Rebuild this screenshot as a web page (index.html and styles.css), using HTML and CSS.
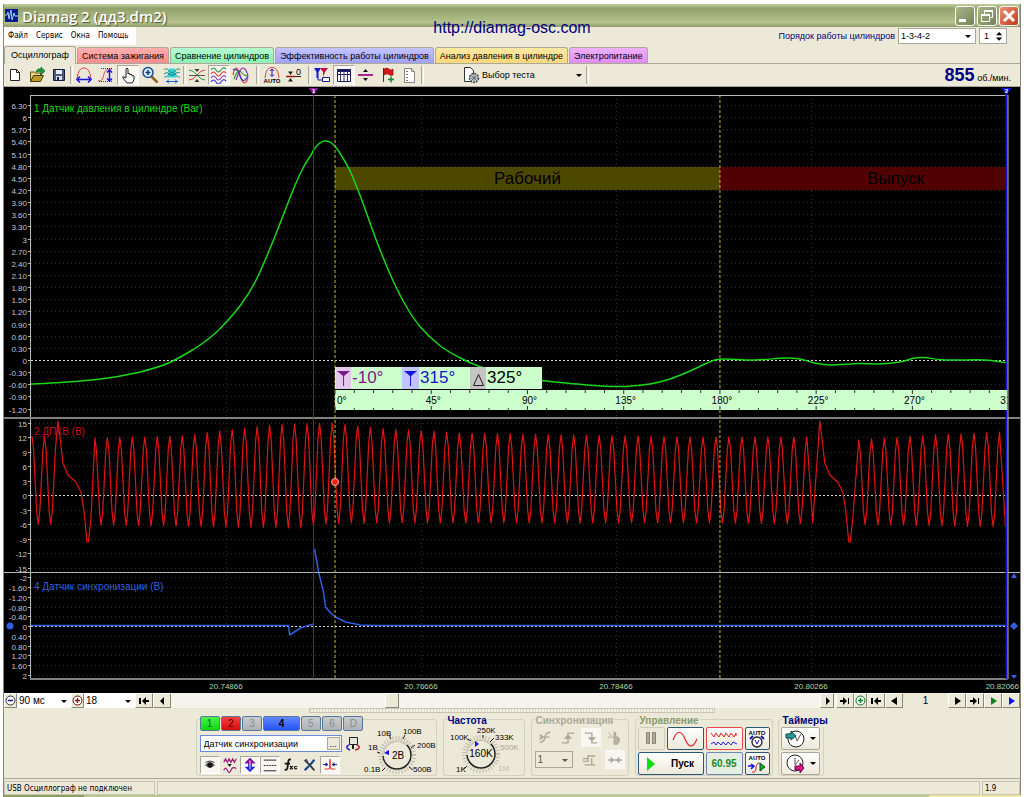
FILE: index.html
```html
<!DOCTYPE html>
<html lang="ru">

<head>
    <meta charset="UTF-8">
    <meta name="viewport" content="width=device-width, initial-scale=1.0">
    <title>Diamag 2 (дд3.dm2)</title>
    <link rel="stylesheet" href="styles.css">
</head>

<body>
    <div class="window">
        <header class="titlebar">
            <svg class="app-icon" width="13" height="13" viewBox="0 0 13 13"><rect width="13" height="13" fill="#0a1a8c"/><path d="M0 6h2l1-3 1 7 2-9 1 10 2-7 1 3h3" fill="none" stroke="#9fd0ff"/></svg>
            <h1>Diamag 2 (дд3.dm2)</h1>
            <button class="win-btn" aria-label="Свернуть"><svg width="20" height="20" viewBox="0 0 20 20"><path d="M4 14.500h7" stroke="#fff" stroke-width="3"/></svg></button>
            <button class="win-btn" aria-label="Развернуть"><svg width="20" height="20" viewBox="0 0 20 20"><path d="M7.500 8V4.500h8v7H13M4.500 8.500h8v7h-8z" fill="none" stroke="#fff"/><path d="M4 9h9M7 5h9" stroke="#fff" stroke-width="2"/></svg></button>
            <button class="win-btn close" aria-label="Закрыть"><svg width="20" height="20" viewBox="0 0 20 20"><path d="M5 5l10 10M15 5L5 15" stroke="#fff" stroke-width="3"/></svg></button>
        </header>
        <a class="site-link" href="http://diamag-osc.com">http://diamag-osc.com</a>

        <div class="menu-row">
            <nav class="menu">
                <button>Файл</button>
                <button>Сервис</button>
                <button>Окна</button>
                <button>Помощь</button>
            </nav>
            <div class="order">
                <label for="order">Порядок работы цилиндров</label>
                <span class="drop order-drop"><select id="order"><option>1-3-4-2</option></select></span>
                <span class="spin"><input type="text" value="1" aria-label="Номер цилиндра"><svg width="7" height="10" viewBox="0 0 9 12"><path d="M0 5l4-4 4 4zM0 8l4 4 4-4z"/></svg></span>
            </div>
        </div>

        <div class="tabs" role="tablist">
            <button class="tab active" role="tab">Осциллограф</button>
            <button class="tab red" role="tab">Система зажигания</button>
            <button class="tab green" role="tab">Сравнение цилиндров</button>
            <button class="tab blue" role="tab">Эффективность работы цилиндров</button>
            <button class="tab yellow" role="tab">Анализ давления в цилиндре</button>
            <button class="tab violet" role="tab">Электропитание</button>
        </div>

        <div class="toolbar">
            <button class="tool" aria-label="Новый"><svg viewBox="0 0 18 18"><path d="M4.500 3.500h6l3 3v8h-9z" fill="#fff" stroke="#222"/><path d="M10.500 3.500v3h3" fill="none" stroke="#222"/></svg></button>
            <button class="tool" aria-label="Открыть"><svg viewBox="0 0 18 18"><path d="M2.500 15V6h4l1 1h5v3" fill="#e8d878" stroke="#5c5010"/><path d="M2.500 15.500l3-6h10l-3 6z" fill="#b99b28" stroke="#4a3d08"/><path d="M8 6q1-4 5-3V1l4 4-4 4V6q-3-1-5 0z" fill="#1f9a3a" stroke="#0a5520" stroke-width=".6"/></svg></button>
            <button class="tool" aria-label="Сохранить"><svg viewBox="0 0 18 18"><path d="M3.500 3.500h11v11h-11z" fill="#4d5a86" stroke="#151c3a"/><path d="M6 4h6v4H6z" fill="#e8ecf8"/><path d="M6 10h6v4H6z" fill="#dde"/><path d="M7 11h2v3H7z" fill="#151c3a"/></svg></button>
            <i class="sep"></i>
            <button class="tool" aria-label="По горизонтали"><svg viewBox="0 0 18 18"><path d="M2 13C3 4 6 2 9 2s6 2 7 11" fill="none" stroke="#e04040"/><path d="M2 13.500h14M5 10.500l-3 3 3 3M13 10.500l3 3-3 3" fill="none" stroke="#1616e0" stroke-width="1.500"/></svg></button>
            <button class="tool" aria-label="По вертикали"><svg viewBox="0 0 18 18"><path d="M1 15c5 0 5-3 6-7s3-5 8-5" fill="none" stroke="#e04040"/><path d="M4 2.500h12M2 15.500h14" stroke="#333" stroke-dasharray="1 1"/><path d="M12.500 4v11M10 6.500L12.500 4 15 6.500M10 12.500l2.500 2.500 2.500-2.500" fill="none" stroke="#1616e0" stroke-width="1.500"/></svg></button>
            <button class="tool pressed" aria-label="Рука"><svg viewBox="0 0 18 18"><path d="M7 12V3q1-2 2 0v5q1-2 2 0v1q1-2 2 0v1q2-1 2 0v3q0 2-2 4H8l-4-5q-1-2 1-1z" fill="#fff" stroke="#222"/></svg></button>
            <button class="tool" aria-label="Масштаб"><svg viewBox="0 0 18 18"><path d="M10.500 10.500l6 6" stroke="#8a6420" stroke-width="2.500"/><circle cx="7" cy="6.500" r="5" fill="#d5ecff" stroke="#1c4f9c" stroke-width="1.500"/><path d="M4.500 6.500h5M7 4v5" stroke="#123a80" stroke-width="1.500"/></svg></button>
            <button class="tool" aria-label="Авторазмер"><svg viewBox="0 0 18 18"><path d="M6 2.500h6l1 3-1 2 2 4H4l2-4-1-2z" fill="#35d4dc"/><g fill="none"><path d="M1 4q3-3 5 1t6 0 5-1" stroke="#1a9a60"/><path d="M1 8q3-3 5 0t6 0 5-1" stroke="#087a86"/><path d="M1 11q3 1 5-3t6 0 5 3" stroke="#209aa8"/><path d="M3 15.500h12M6 13.500l-2 2 2 2M12 13.500l2 2-2 2" stroke="#1a60c8"/></g></svg></button>
            <i class="sep"></i>
            <button class="tool" aria-label="Центровка"><svg viewBox="0 0 18 18"><path d="M1 4q4 0 8 5t8 5" fill="none" stroke="#2a9a40"/><path d="M1 14q4 0 8-5t8-5" fill="none" stroke="#e04040"/><path d="M1 9.500h16" stroke="#555"/><path d="M9 6L6.500 3h5zM9 13l-2.500 3h5z" fill="#333"/></svg></button>
            <button class="tool pressed" aria-label="Раздельно"><svg viewBox="0 0 18 18"><g fill="none" stroke-width="1.200"><path d="M1 4q2.500-4 5 0t5 0 5-1" stroke="#2a9a40"/><path d="M1 8q2.500-4 5 0t5 0 5-1" stroke="#e04040"/><path d="M1 12q2.500-4 5 0t5 0 5-1" stroke="#8a4ab0"/><path d="M1 16q2.500-4 5 0t5 0 5-1" stroke="#3434d8"/></g></svg></button>
            <button class="tool" aria-label="Совместно"><svg viewBox="0 0 18 18"><g fill="none" stroke-width="1.200"><path d="M1 9q3-14 7 0t8 3" stroke="#e04040"/><path d="M1 4q4-3 7 6t8 0" stroke="#3434d8"/><path d="M2 13Q6 2 9 6t7 4" stroke="#2a9a40"/><path d="M4 14Q8 2 11 2t5 8" stroke="#8a28b8"/></g></svg></button>
            <i class="sep wide"></i>
            <button class="tool" aria-label="Авто"><svg viewBox="0 0 18 18"><path d="M2 12C3 3 6 1.500 9 1.500s6 1.500 7 10.500" fill="none" stroke="#e04040"/><path d="M9 3v7M7 5l2-2 2 2M7 8.500l2 2 2-2" fill="none" stroke="#1616c0"/><text x="9" y="17" text-anchor="middle" class="svg-tiny bold">AUTO</text></svg></button>
            <button class="tool" aria-label="Ноль"><svg viewBox="0 0 18 18"><path d="M1 10.500h9" stroke="#a01010" stroke-width="1.500"/><path d="M10 10.500h6" stroke="#222"/><path d="M5.500 9L3 5.500h5zM5.500 12L3 15.500h5z" fill="#222"/><text x="11" y="9" class="svg-small">0</text></svg></button>
            <i class="sep mid"></i>
            <button class="tool" aria-label="Маркеры"><svg viewBox="0 0 18 18"><path d="M1 2h7L5.500 6v6h-2V6z" fill="#1616e0"/><path d="M7 2h8l-3 4-2 5V6z" fill="#c01050"/><path d="M9.500 11.500h7v4h-7z" fill="#fff" stroke="#1616a0"/><path d="M5 12v2h4" fill="none" stroke="#1616a0"/></svg></button>
            <button class="tool pressed" aria-label="Таблица"><svg viewBox="0 0 18 18"><path d="M2.500 3.500h13v12h-13z" fill="#fff" stroke="#181860"/><path d="M2 4h14v2H2z" fill="#181860"/><path d="M2 8.500h14" stroke="#181860"/><path d="M5.500 5v10M9 5v10M12.500 5v10" stroke="#333366"/></svg></button>
            <button class="tool" aria-label="Линия"><svg viewBox="0 0 18 18"><path d="M1 9h15" stroke="#a0108a" stroke-width="1.800"/><path d="M8.500 3L6 6h5zM8.500 15L6 12h5z" fill="#111"/></svg></button>
            <button class="tool" aria-label="Флаг"><svg viewBox="0 0 18 18"><path d="M4.500 2v14" stroke="#333"/><path d="M5 3q3-2 5 0t4 0v6q-2 1-4-.500T5 9z" fill="#d81818" stroke="#7a0808" stroke-width=".6"/><path d="M9 13.500h6M12 10.500v6" stroke="#128a28" stroke-width="1.500"/></svg></button>
            <button class="tool" aria-label="Отчёт"><svg viewBox="0 0 18 18"><path d="M3.500 2.500h7l3 3v11h-10z" fill="#fff" stroke="#888"/><path d="M6 5v10" stroke="#777" stroke-dasharray="1 2" stroke-width="2"/><path d="M10.500 2.500v3h3" fill="none" stroke="#888"/></svg></button>
            <i class="sep"></i>
            <div class="test">
                <svg width="18" height="18" viewBox="0 0 18 18"><path d="M2.500 1.500h6l3 3v11h-9z" fill="#fff" stroke="#333"/><circle cx="12" cy="12" r="4.500" fill="#cdd8d0" stroke="#445" stroke-dasharray="2 1" stroke-width="1.500"/><path d="M8 12h8M12 8v8M9 9l6 6M15 9l-6 6" stroke="#556" stroke-width=".7"/></svg>
                <span class="drop test-drop"><select aria-label="Тест"><option>Выбор теста</option></select></span>
            </div>
            <i class="sep"></i>
            <div class="rpm"><b>855</b> об./мин.</div>
        </div>

        <svg class="scope" id="scope" role="img" aria-label="Осциллограмма"></svg>

        <div class="nav-row">
            <button class="nav-btn round" aria-label="Меньше"><svg width="11" height="11" viewBox="0 0 11 11"><circle cx="5.500" cy="5.500" r="4.500" fill="#fff" stroke="#333"/><path d="M3 5.500h5" stroke="#1a1a90" stroke-width="1.500"/></svg></button>
            <span class="drop time-drop"><select aria-label="Развёртка"><option>90 мс</option></select></span>
            <button class="nav-btn round" aria-label="Больше"><svg width="11" height="11" viewBox="0 0 11 11"><circle cx="5.500" cy="5.500" r="4.500" fill="#fff" stroke="#701010"/><path d="M3 5.500h5M5.500 3v5" stroke="#901a1a" stroke-width="1.500"/></svg></button>
            <span class="drop zoom-drop"><select aria-label="Масштаб"><option>18</option></select></span>
            <button class="nav-btn" aria-label="В начало"><svg width="10" height="8" viewBox="0 0 10 8"><path d="M0 1h2v6H0zM7 0v8L3 4zM7 3h3v2H7z"/></svg></button>
            <button class="nav-btn" aria-label="Назад"><svg width="5" height="8" viewBox="0 0 5 8"><path d="M4 0v8L0 4z"/></svg></button>
            <div class="trough"><span class="thumb"></span></div>
            <button class="nav-btn narrow" aria-label="Вперёд"><svg width="5" height="8" viewBox="0 0 5 8"><path d="M1 0v8l4-4z"/></svg></button>
            <button class="nav-btn" aria-label="В конец"><svg width="10" height="8" viewBox="0 0 10 8"><path d="M8 1h1v6H8zM3 0v8l4-4zM0 3h3v2H0z"/></svg></button>
            <button class="nav-btn round" aria-label="Добавить кадр"><svg width="11" height="11" viewBox="0 0 11 11"><circle cx="5.500" cy="5.500" r="4.500" fill="#fff" stroke="#107020"/><path d="M3 5.500h5M5.500 3v5" stroke="#108020" stroke-width="1.500"/></svg></button>
            <button class="nav-btn" aria-label="Первый кадр"><svg width="10" height="8" viewBox="0 0 10 8"><path d="M0 1h2v6H0zM7 0v8L3 4zM7 3h3v2H7z"/></svg></button>
            <button class="nav-btn" aria-label="Предыдущий кадр"><svg width="7" height="8" viewBox="0 0 7 8"><path d="M6 0v8L0 4z"/></svg></button>
            <output class="frame">1</output>
            <button class="nav-btn" aria-label="Следующий кадр"><svg width="7" height="8" viewBox="0 0 7 8"><path d="M1 0v8l6-4z"/></svg></button>
            <button class="nav-btn" aria-label="Последний кадр"><svg width="10" height="8" viewBox="0 0 10 8"><path d="M8 1h1v6H8zM3 0v8l4-4zM0 3h3v2H0z"/></svg></button>
            <button class="nav-btn" aria-label="Воспроизвести"><svg width="7" height="8" viewBox="0 0 7 8"><path d="M1 0v8l6-4z" fill="#108020"/></svg></button>
            <button class="nav-btn" aria-label="Воспроизвести всё"><svg width="7" height="8" viewBox="0 0 7 8"><path d="M1 0v8l6-4z" fill="#1010f0"/></svg></button>
        </div>

        <div class="splitter"></div>

        <main class="controls">
            <section class="group channels">
                <div class="channel-main">
                    <div class="channel-tabs">
                        <button class="ch ch1">1</button>
                        <button class="ch ch2">2</button>
                        <button class="ch">3</button>
                        <button class="ch ch4">4</button>
                        <button class="ch">5</button>
                        <button class="ch">6</button>
                        <button class="ch">D</button>
                    </div>
                    <div class="sensor-row">
                        <div class="sensor">
                            <input type="text" value="Датчик синхронизации" aria-label="Название датчика">
                            <button aria-label="Выбрать датчик">...</button>
                        </div>
                        <svg width="16" height="16" viewBox="0 0 16 16"><path d="M4.500 1.500h8v7h-8z" fill="#dfe8df" stroke="#222"/><path d="M8 9v4" stroke="#222" stroke-width="2"/><path d="M4 9q-4 2-1 4l2 1" fill="none" stroke="#2020c0" stroke-width="1.500"/><path d="M12 9q4 2 1 4l-3 1" fill="none" stroke="#c02020" stroke-width="1.500"/></svg>
                    </div>
                    <div class="channel-tools">
                        <button class="tool pressed" aria-label="Показать"><svg viewBox="0 0 18 18"><path d="M3 9q6-6 12 0-6 6-12 0z" fill="#777"/><circle cx="9" cy="9" r="3" fill="#111"/><path d="M4 6q5-3 10 0" fill="none" stroke="#222"/></svg></button>
                        <button class="tool" aria-label="Сглаживание"><svg viewBox="0 0 18 18"><path d="M2 6l2-4 2 4 2-4 2 4 2-4 2 4 2-4M2 15q2-5 4 0t4 0 6-2" fill="none" stroke="#9a1a80" stroke-width="1.300"/><path d="M6 8h5l-2.500 3z" fill="#111"/></svg></button>
                        <button class="tool pressed" aria-label="Смещение"><svg viewBox="0 0 18 18"><path d="M9 1L3 7h4v4H3l6 6 6-6h-4V7h4z" fill="#1a1ae8"/><path d="M9 1L3 7h4v2h4V7h4z" fill="#8a1090"/><path d="M9 4v10" stroke="#fff"/></svg></button>
                        <button class="tool pressed" aria-label="Уровни"><svg viewBox="0 0 18 18"><path d="M2 3.500h14M2 15.500h14" stroke="#111"/><path d="M2 9.500h14" stroke="#111" stroke-dasharray="2 1"/></svg></button>
                        <button class="tool" aria-label="Функция"><svg viewBox="0 0 18 18"><path d="M10 3q-3-1-3 3l-1 7q-1 2-3 1M3 7.500h6" fill="none" stroke="#111" stroke-width="2"/><path d="M9 10l3 4M12 10l-3 4M17 11q-3-1-3 1t3 1" fill="none" stroke="#111" stroke-width="1.300"/></svg></button>
                        <button class="tool" aria-label="Настройка"><svg viewBox="0 0 18 18"><path d="M4 4l10 11" stroke="#334" stroke-width="2"/><path d="M14 3L9 9M3 15l5-5" stroke="#1a4a88" stroke-width="2.500"/><path d="M2 4l3-2 2 3-2 2z" fill="#445"/></svg></button>
                        <button class="tool pressed" aria-label="Синхроимпульс"><svg viewBox="0 0 18 18"><path d="M3 13.500h5q1-1 1-11 0 10 1 11h5" fill="none" stroke="#e02020"/><path d="M1 8.500h5M12 8.500h5" stroke="#101060"/><path d="M4 6l3 2.500L4 11zM14 6l-3 2.500 3 2.500z" fill="#1616a0"/></svg></button>
                    </div>
                </div>
                <svg class="dial" width="72" height="54" viewBox="0 0 72 54">
                    <circle cx="33" cy="30" r="17" class="dial-ticks"/>
                    <circle cx="33" cy="30" r="14" class="dial-knob"/>
                    <path d="M19 31a14 14 0 0 1 24-11" class="dial-light"/>
                    <path d="M20 28l5-3v5z" fill="#1010f0"/>
                    <path d="M21 43l-3 3M16 28l-3-1M27 14l-2-4M39 14l2-4M47 23l4-3M45 42l4 3" stroke="#222"/>
                    <g class="dial-text">
                        <text x="34" y="34" text-anchor="middle" class="dial-value">2В</text>
                        <text x="0" y="47">0.1В</text>
                        <text x="4" y="25">1В</text>
                        <text x="13" y="11">10В</text>
                        <text x="39" y="9">100В</text>
                        <text x="53" y="23">200В</text>
                        <text x="49" y="47">500В</text>
                    </g>
                </svg>
            </section>

            <section class="group freq">
                <h2>Частота</h2>
                <svg class="dial" width="80" height="52" viewBox="0 0 80 52">
                    <circle cx="37" cy="30" r="17" class="dial-ticks"/>
                    <circle cx="37" cy="30" r="14" class="dial-knob"/>
                    <path d="M23 31a14 14 0 0 1 24-11" class="dial-light"/>
                    <path d="M31 17l4 3-4 3z" fill="#1010f0"/>
                    <path d="M23 42l-3 3M27 17l-3-2M39 14v-3M46 18l4-4" stroke="#222"/>
                    <g class="dial-text">
                        <text x="37" y="33" text-anchor="middle" class="dial-value">160K</text>
                        <text x="12" y="48">1K</text>
                        <text x="6" y="16">100K</text>
                        <text x="33" y="9">250K</text>
                        <text x="51" y="16">333K</text>
                        <text x="56" y="26" fill="#aaa698">500K</text>
                        <text x="54" y="47" fill="#c0bcae">1M</text>
                    </g>
                </svg>
            </section>

            <section class="group sync">
                <h2 class="off">Синхронизация</h2>
                <div class="sync-row">
                    <button class="tool" disabled aria-label="Фронт 1"><svg viewBox="0 0 18 18"><path d="M3 14q5 0 6-6t6-5M3 8h11M3 5l4 3-4 3" fill="none" stroke="#aaa698" stroke-width="1.500"/></svg></button>
                    <button class="tool" disabled aria-label="Фронт 2"><svg viewBox="0 0 18 18"><path d="M2 14.500h7v-11h7M6 9h6M9 6L6 9h6z" fill="none" stroke="#aaa698" stroke-width="1.500"/></svg></button>
                    <button class="tool lit" disabled aria-label="Спад"><svg viewBox="0 0 18 18"><path d="M2 3.500h8v11h6M7 9h6l-3 3z" fill="none" stroke="#aaa698" stroke-width="1.500"/></svg></button>
                    <button class="tool" disabled aria-label="Ручная"><svg viewBox="0 0 18 18"><path d="M3 3l5 6M9 9V3q1-2 2 0v4l4 2v4l-2 3H9z" fill="#b8b4a4" stroke="#aaa698"/><path d="M2 9q3-3 4 0" fill="none" stroke="#aaa698"/></svg></button>
                </div>
                <div class="sync-row">
                    <span class="drop sync-drop"><select disabled aria-label="Канал синхронизации"><option>1</option></select></span>
                    <button class="tool" disabled aria-label="Уровень"><svg viewBox="0 0 18 18"><path d="M2 10.500h6v-6h8M4 14.500h12M2 7.500h6M12 7v8" fill="none" stroke="#aaa698" stroke-width="1.500"/></svg></button>
                    <button class="tool lit" disabled aria-label="Сдвиг"><svg viewBox="0 0 18 18"><path d="M1 9h16" stroke="#aaa698" stroke-width="1.500"/><path d="M4 5l4 4-4 4zM14 5l-4 4 4 4z" fill="#aaa698"/></svg></button>
                </div>
            </section>

            <section class="group run">
                <h2 class="olive">Управление</h2>
                <div class="run-grid">
                    <div class="run-pair">
                        <button class="big pause" disabled aria-label="Пауза"><svg width="12" height="13" viewBox="0 0 12 13"><path d="M1.500.500h3v11h-3zM7.500.500h3v11h-3z" fill="#b0ac9c" stroke="#888476"/></svg></button>
                        <button class="big wave" aria-label="Синус"><svg width="26" height="16" viewBox="0 0 26 16"><path d="M1 9Q7-6 13 8t12 0" fill="none" stroke="#e02020" stroke-width="1.200"/></svg></button>
                    </div>
                    <button class="big red-edge" aria-label="Запись"><svg width="28" height="16" viewBox="0 0 28 16"><path d="M1 2l3 4 2-4 3 4 2-4 3 4 2-4 3 4 2-4 3 4 2-4v3" fill="none" stroke="#e02020"/><path d="M1 13l3-2 2 3 2-3 3 3 2-3 3 3 2-3 3 3 2-3 4 2" fill="none" stroke="#2020e0"/></svg></button>
                    <button class="big" aria-label="Авто таймер"><svg width="20" height="20" viewBox="0 0 20 20"><text x="10" y="6" text-anchor="middle" class="svg-tiny bold">AUTO</text><circle cx="10" cy="13" r="5" fill="#fff" stroke="#222" stroke-width="1.300"/><path d="M8 11l2 4 2-4" fill="none" stroke="#1616c0"/><path d="M3 10l3-3M17 10l-3-3" stroke="#1616c0" stroke-width="2"/></svg></button>
                    <button class="big start"><svg width="9" height="14" viewBox="0 0 9 14"><path d="M0 0l8 7-8 7z" fill="#0ee010"/></svg>Пуск</button>
                    <output class="big counter">60.95</output>
                    <button class="big" aria-label="Авто пуск"><svg width="20" height="20" viewBox="0 0 20 20"><text x="10" y="6" text-anchor="middle" class="svg-tiny bold">AUTO</text><path d="M1 12h5M4 10l3 2-3 3" fill="none" stroke="#1616e0" stroke-width="1.500"/><path d="M5 18q4 1 4-4t4-5" fill="none" stroke="#c02020"/><path d="M13 9l5 4-5 4z" fill="#18a828" stroke="#085010"/></svg></button>
                </div>
            </section>

            <section class="group timers">
                <h2>Таймеры</h2>
                <button class="big timer" aria-label="Таймер включения"><svg width="20" height="20" viewBox="0 0 20 20"><circle cx="11" cy="10" r="8" fill="#fff" stroke="#222"/><path d="M10 6l2 6 4-7" fill="none" stroke="#555"/><path d="M1 5h5V2l5 5-5 4V9H1z" fill="#2a9a94" stroke="#0a4a48"/></svg><i class="caret"></i></button>
                <button class="big timer" aria-label="Таймер выключения"><svg width="20" height="20" viewBox="0 0 20 20"><circle cx="10" cy="9" r="8" fill="#fff" stroke="#222"/><path d="M10 4v7l4-5" fill="none" stroke="#555"/><path d="M10 12h5V9l4 5-4 5v-3h-5z" fill="#d81a88" stroke="#600838"/></svg><i class="caret"></i></button>
            </section>
        </main>

        <footer class="status">
            <span class="usb">USB Осциллограф не подключен</span>
            <span class="fill"></span>
            <span class="version">1.9</span>
        </footer>
    </div>
    <div class="desktop-edge"><span></span><span></span><span></span></div>

    <script src="scope.js"></script>
</body>

</html>
```
FILE: styles.css
```css
:root {
    --face: #ece9d8;
    --shade: #aca899;
    --line: #c9c5b2;
    --navy: #000080;
    --field: #fff;
}

* {
    margin: 0;
    padding: 0;
    box-sizing: border-box;
}

body {
    font-family: "Liberation Sans", Arial, sans-serif;
    font-size: 9px;
    line-height: 12px;
    color: #000;
    background: #fff;
    padding: 4px 3px 0;
}

button,
input,
select,
output {
    font: inherit;
    color: inherit;
}

button {
    border: none;
    background: none;
    display: flex;
    align-items: center;
    justify-content: center;
}

.window {
    position: relative;
    background: var(--face);
    border-left: 1px solid #8a8878;
    border-right: 1px solid #8a8878;
}

.titlebar {
    display: flex;
    align-items: center;
    gap: 2px;
    height: 23px;
    padding: 0 1px;
    background: linear-gradient(#c3cf9c, #93a26c 20%, #a3b17d 50%, #b5c28e 80%, #8f9d6c);
}

.titlebar h1 {
    flex: 1;
    margin-left: 2px;
    font-family: "Open Sans", sans-serif;
    font-size: 15px;
    line-height: 20px;
    font-weight: 600;
    color: #fff;
    text-shadow: 1px 1px 1px #4a5530;
}

.win-btn {
    width: 20px;
    height: 20px;
    border: 1px solid #fff;
    border-radius: 3px;
    background: linear-gradient(135deg, #a9b58a, #74835a);
}

.win-btn svg {
    flex: none;
}

.win-btn.close {
    background: linear-gradient(135deg, #ea9078, #c43a1c);
}

.site-link {
    position: absolute;
    top: 14px;
    left: 0;
    right: 0;
    width: max-content;
    margin: 0 auto;
    font-size: 16px;
    line-height: 20px;
    color: var(--navy);
    text-decoration: none;
}

.menu-row {
    display: flex;
    justify-content: space-between;
    height: 18px;
}

.menu {
    display: flex;
    gap: 8px;
    padding: 0 7px 0 4px;
    background: #fff;
    font-family: "DejaVu Sans Condensed", "DejaVu Sans", sans-serif;
    font-size: 8px;
}

.order {
    display: flex;
    align-items: center;
    gap: 3px;
    padding-right: 13px;
    color: var(--navy);
}

.drop {
    position: relative;
    display: flex;
    background: var(--field);
    color: #000;
}

.drop select {
    appearance: none;
    flex: 1;
    width: 100%;
    border: none;
    background: none;
    padding-left: 2px;
    color: inherit;
    opacity: 1;
}

.drop::after,
.caret {
    content: "";
    border: 3px solid transparent;
    border-top-color: currentColor;
    border-bottom: none;
}

.drop::after {
    position: absolute;
    right: 4px;
    top: calc(50% - 1px);
}

.order-drop {
    width: 78px;
    height: 16px;
    border: 1px solid var(--shade);
}

.spin {
    display: flex;
    align-items: center;
    width: 28px;
    height: 16px;
    background: #fff;
    border: 1px solid var(--shade);
    color: #000;
}

.spin input {
    width: 16px;
    border: none;
    padding-left: 4px;
}

.tabs {
    display: flex;
    align-items: flex-end;
    gap: 1px;
    height: 19px;
    border-bottom: 1px solid var(--shade);
}

.tab {
    height: 16px;
    padding: 0 4px;
    border: 1px solid var(--shade);
    border-bottom: none;
    border-radius: 3px 3px 0 0;
}

.tab.active {
    height: 18px;
    margin-bottom: -1px;
    padding: 0 6px 2px;
    background: var(--face);
}

.tab.red {
    background: linear-gradient(#ffb0b0, #fd8c8c);
}

.tab.green {
    background: linear-gradient(#b4fcd0, #8ef2b4);
}

.tab.blue {
    background: linear-gradient(#c4c4ff, #a0a0fa);
}

.tab.yellow {
    background: linear-gradient(#ffe8a4, #fcd87c);
}

.tab.violet {
    background: linear-gradient(#f0b0ff, #e08cf8);
}

.toolbar {
    display: flex;
    align-items: center;
    height: 23px;
    border-bottom: 1px solid var(--shade);
}

.tool {
    flex: none;
    width: 22px;
    height: 20px;
}

.tool svg {
    flex: none;
    width: 18px;
    height: 18px;
}

.tool.pressed,
.tool.lit {
    background: #f8f7f1;
    border: 1px solid;
    border-color: var(--shade) #fff #fff var(--shade);
}

.tool.lit {
    border-color: #f8f7f1;
}

.sep {
    flex: none;
    width: 3px;
    height: 18px;
    border-left: 1px solid var(--shade);
    border-right: 1px solid #fff;
}

.sep.mid {
    margin-left: 3px;
}

.sep.wide {
    margin: 0 2px 0 4px;
}

.svg-tiny {
    font-size: 6px;
}

.svg-small {
    font-size: 9px;
}

.bold {
    font-weight: bold;
}

.test {
    display: flex;
    align-items: center;
    margin-left: 38px;
}

.test-drop {
    width: 106px;
    background: none;
}

.rpm {
    margin-left: auto;
    padding-right: 9px;
    white-space: nowrap;
}

.rpm b {
    font-size: 18px;
    line-height: 20px;
    color: var(--navy);
}

.scope {
    display: block;
    width: 100%;
    height: 606px;
    background: #000;
}

.scope text {
    font-size: 8px;
    fill: #c8c8c8;
}

.scope .grid {
    stroke: #2c2c2c;
    stroke-dasharray: 1 3;
}

.scope .zero {
    stroke: #d8d8d8;
    stroke-dasharray: 2 2;
}

.scope .frame-line {
    stroke: #b8b8b8;
    stroke-width: 1;
}

.scope .divider {
    stroke: #808080;
    stroke-width: 2;
}

.scope .angle-line {
    stroke: #c8b428;
    stroke-dasharray: 3 2;
}

.scope .trace {
    fill: none;
    stroke-linejoin: round;
}

.scope .pressure {
    stroke: #18d818;
    stroke-width: 1.5;
}

.scope .crank {
    stroke: #e01414;
    stroke-width: 1.2;
}

.scope .pulse {
    stroke: #2f5fe0;
    stroke-width: 1.5;
}

.scope .name {
    font-size: 10px;
}

.scope .time {
    fill: #a8dca8;
}

.scope .stroke-name {
    font-size: 17px;
    fill: #000;
}

.scope .ruler {
    fill: #000;
    font-size: 10px;
}

.scope .measure {
    font-size: 17px;
}

.scope .flag {
    font-size: 6px;
    font-weight: bold;
    fill: #fff;
}

.nav-row {
    display: flex;
    height: 15px;
    font-size: 10px;
    background: #f5f3ec;
}

.nav-btn {
    flex: none;
    width: 18px;
    background: var(--face);
    border: 1px solid;
    border-color: #fff #8a8878 #8a8878 #fff;
}

.nav-btn.round {
    width: 13px;
}

.nav-btn.narrow {
    width: 14px;
    margin-right: 2px;
}

.time-drop {
    width: 54px;
}

.zoom-drop {
    width: 51px;
}

.trough {
    flex: 1;
    display: flex;
}

.thumb {
    width: 14px;
    margin-left: 33%;
    background: var(--face);
    border: 1px solid;
    border-color: #fff #8a8878 #8a8878 #fff;
}

.frame {
    width: 45px;
    text-align: center;
    line-height: 15px;
    background: var(--face);
}

.splitter {
    width: 40%;
    height: 5px;
    margin: 0 auto;
    border: 1px solid var(--line);
    background: repeating-linear-gradient(90deg, #d8d4c2 0 1px, #f4f2e8 1px 3px);
}

.controls {
    display: flex;
    justify-content: center;
    gap: 6px;
    height: 66px;
    padding: 6px 5px 2px 0;
    border-bottom: 1px solid var(--shade);
}

.group {
    position: relative;
    padding: 0 3px;
    border: 1px solid #d5d1be;
    border-radius: 3px;
    background: var(--face);
}

.group h2 {
    position: absolute;
    top: -5px;
    left: 3px;
    padding: 0 1px;
    font-size: 10px;
    line-height: 12px;
    color: var(--navy);
    background: var(--face);
}

.group h2.off {
    color: var(--shade);
}

.group h2.olive {
    color: #8a9a6a;
}

.channels {
    display: flex;
    width: 241px;
}

.channel-main {
    display: flex;
    flex-direction: column;
    gap: 4px;
    width: 164px;
}

.channel-tabs {
    display: flex;
    gap: 1px;
    margin-top: -4px;
}

.ch {
    width: 21px;
    height: 15px;
    font-size: 10px;
    color: #8c8c8c;
    border: 1px solid #5a7898;
    border-radius: 2px;
    background: linear-gradient(#c8ccd0, #aeb2b8);
}

.ch1 {
    color: #064;
    background: linear-gradient(#4cf44c, #0cd80c);
}

.ch2 {
    color: #500;
    background: linear-gradient(#f84040, #d80c0c);
}

.ch4 {
    width: 38px;
    color: #000;
    font-weight: bold;
    background: linear-gradient(#6088ff, #2454f4);
}

.sensor-row {
    display: flex;
    align-items: center;
    gap: 3px;
}

.sensor {
    display: flex;
    width: 142px;
    height: 17px;
    border: 1px solid #6a8ae0;
    background: #fff;
}

.sensor input {
    flex: 1;
    min-width: 0;
    border: none;
    padding-left: 3px;
    background: none;
}

.sensor button {
    width: 13px;
    margin: 1px;
    background: var(--face);
    border: 1px solid var(--shade);
    line-height: 6px;
}

.channel-tools {
    display: flex;
}

.channel-tools .tool {
    width: 20px;
    height: 18px;
}

.channel-tools .tool svg,
.sync .tool svg {
    width: 16px;
    height: 16px;
}

.dial {
    overflow: visible;
}

.channels .dial {
    margin-top: 5px;
}

.dial-text {
    font-size: 8px;
}

.dial-value {
    font-size: 10px;
}

.dial-ticks {
    fill: none;
    stroke: #bcb8a8;
    stroke-width: 4;
    stroke-dasharray: 1 2;
}

.dial-knob {
    fill: var(--face);
    stroke: #222;
    stroke-width: 1.5;
}

.dial-light {
    fill: none;
    stroke: #d8d4c4;
    stroke-width: 2;
}

.freq {
    width: 82px;
    padding: 4px 0 0;
}

.sync {
    display: flex;
    flex-direction: column;
    gap: 3px;
    width: 98px;
    padding-top: 8px;
}

.sync-row {
    display: flex;
    align-items: center;
    justify-content: space-between;
}

.sync .tool {
    width: 20px;
    height: 19px;
}

.sync-drop {
    width: 38px;
    height: 17px;
    border: 1px solid var(--shade);
    background: var(--face);
    font-size: 10px;
    color: #555;
}

.run {
    width: 138px;
    padding: 7px 2px 0;
}

.run-grid {
    display: grid;
    grid-template-columns: 66px 37px 25px;
    gap: 2px;
}

.run-pair {
    display: flex;
    gap: 2px;
}

.big {
    height: 23px;
    border: 1px solid #2c5878;
    border-radius: 2px;
    background: linear-gradient(#fff, #ece9dc);
}

.pause {
    flex: 0 0 27px;
    border-color: #d0ccba;
    background: var(--face);
}

.wave {
    flex: 1;
}

.red-edge {
    border: 1px solid #e84a4a;
}

.start {
    gap: 15px;
    font-size: 10px;
    font-weight: bold;
}

.counter {
    text-align: center;
    line-height: 21px;
    font-size: 10px;
    font-weight: bold;
    color: #1a8a28;
    background: #e6eee4;
    border-color: #6a8ab0;
}

.timers {
    width: 46px;
    margin-left: -1px;
    padding: 7px 2px 0;
}

.timer {
    width: 39px;
    gap: 5px;
    margin-bottom: 2px;
    border-color: var(--shade);
}

.status {
    display: flex;
    height: 16px;
    gap: 2px;
    padding-top: 2px;
    font-family: "DejaVu Sans Condensed", "DejaVu Sans", sans-serif;
    font-size: 8px;
    line-height: 13px;
}

.status span {
    border: 1px solid var(--line);
    padding-left: 2px;
}

.usb {
    width: 151px;
}

.fill {
    flex: 1;
}

.version {
    width: 38px;
}

.desktop-edge {
    display: flex;
    height: 3px;
    background: #b8c690;
}

.desktop-edge span:first-child {
    width: 8%;
    background: #8aa060;
}

.desktop-edge span:last-child {
    width: 9%;
    margin-left: auto;
    background: #ece4a0;
}
```
FILE: scope.js
```js
const svg = document.getElementById('scope');
const SPAN = 978; // trace data is sampled on a 978 unit wide sweep
const LEFT = 27;
const TOP = 8;
const BOTTOM = 592;

const pressure = [
    [0, 297], [30, 295.5], [70, 292], [105, 286], [130, 279], [142, 274], [160, 264], [175, 254],
    [190, 241], [210, 218], [225, 194], [240, 160], [255, 122], [265, 97], [273, 80], [281, 67],
    [283, 63], [288, 57], [294, 54], [301, 56], [308, 64], [320, 85], [332, 115], [345, 151],
    [360, 188], [375, 218], [390, 240], [410, 259], [430, 271], [448, 279], [480, 289], [511, 293.5],
    [540, 296.5], [570, 299], [595, 299.5], [620, 297], [640, 292], [660, 284], [675, 277], [685, 273],
    [695, 272], [725, 273], [755, 271], [770, 272], [785, 276], [800, 278], [830, 276.5], [850, 277],
    [870, 275], [885, 271], [895, 270.5], [915, 273], [955, 273], [978, 276]
];

const pulse = [
    [[0, 538.5], [258, 538.5], [259, 548], [270, 541], [276, 539], [283, 537]],
    [[284, 462], [288, 485], [293, 505], [295, 520], [300, 526], [305, 530], [315, 535], [330, 538], [345, 538.5], [978, 538.5]]
];

function smooth(pts) {
    let d = `M${pts[0]}`;
    for (let i = 0; i < pts.length - 1; i++) {
        const a = pts[Math.max(i - 1, 0)], b = pts[i], c = pts[i + 1], e = pts[Math.min(i + 2, pts.length - 1)];
        d += `C${b[0] + (c[0] - a[0]) / 6} ${b[1] + (c[1] - a[1]) / 6} ${c[0] - (e[0] - b[0]) / 6} ${c[1] - (e[1] - b[1]) / 6} ${c}`;
    }
    return d;
}

function lerp(table, x) {
    for (let i = 1; i < table.length; i++) {
        if (x <= table[i][0]) {
            const [x0, y0] = table[i - 1], [x1, y1] = table[i];
            return y0 + (y1 - y0) * (x - x0) / (x1 - x0);
        }
    }
    return table[table.length - 1][1];
}

// teeth between two peaks, top and bottom follow the envelope
function teeth(from, to, count) {
    const high = [[0, 349], [64, 351], [150, 349], [190, 344], [240, 338], [302, 336], [345, 341], [430, 346], [660, 350], [780, 350], [829, 353], [900, 348], [978, 345]];
    const low = [[0, 437], [64, 438], [270, 441], [290, 437], [320, 436], [700, 436], [800, 437], [978, 440]];
    const pts = [];
    const step = (to - from) / count;
    for (let i = 0; i < count * 8; i++) {
        const x = from + i * step / 8;
        const h = lerp(high, x), l = lerp(low, x);
        pts.push([x, (h + l) / 2 - Math.cos(i * Math.PI / 4) * (l - h) / 2]);
    }
    return pts;
}

function gap(x) {
    return [[0, 334], [2, 350], [5, 376], [10, 388], [18, 395], [23, 405], [26, 423], [29, 455], [30.5, 455], [33, 432]]
        .map(([dx, y]) => [x + dx, y]);
}

const crank = [
    ...teeth(1, 26, 2), ...gap(27),
    ...teeth(64, 289, 18), ...teeth(289, 569, 22), ...teeth(569, 673, 8), ...teeth(673, 777, 8), [777, 350], [783, 436],
    ...gap(790), ...teeth(829, 970, 11), [970, 345], [976, 440]
];

function draw() {
    const W = svg.clientWidth;
    const right = W - 12.5;
    const k = (right - LEFT) / SPAN;
    const X = u => LEFT + u * k;
    const fit = pts => pts.map(([u, y]) => [X(u), y]);
    const out = [];
    const line = (x1, y1, x2, y2, cls, extra = '') => out.push(`<line x1="${x1}" y1="${y1}" x2="${x2}" y2="${y2}" class="${cls}" ${extra}/>`);
    const text = (x, y, str, cls = '', anchor = 'start', style = '') => out.push(`<text x="${x}" y="${y}" class="${cls}" text-anchor="${anchor}" ${style}>${str}</text>`);

    // axes: zero line, pixels per step, value step, first and last step
    const axes = [
        { zero: 273.5, px: 12.14, step: 0.3, from: -4, to: 21, dir: 1, digits: 2 },
        { zero: 408.5, px: 14.5, step: 3, from: -5, to: 5, dir: 1, digits: 0 },
        { zero: 539.5, px: 9.75, step: 0.4, from: -5, to: 5, dir: -1, digits: 2 }
    ];
    for (const a of axes) {
        for (let i = a.from; i <= a.to; i++) {
            const y = Math.floor(a.zero - i * a.px) + 0.5;
            const v = i * a.step * a.dir;
            line(LEFT, y, right, y, i === 0 ? 'zero' : 'grid');
            line(LEFT - 3, y, LEFT, y, 'frame-line');
            text(LEFT - 4, y + 3, Math.abs(v - Math.round(v)) < 0.01 ? Math.round(v) + 0 : v.toFixed(a.digits), '', 'end');
        }
    }
    for (let i = 0; i < 5; i++) {
        const x = Math.round(X(195.3 * (i + 1)));
        line(x + 0.5, TOP, x + 0.5, BOTTOM, 'grid');
        const last = i === 4;
        text(last ? W - 1 : x, 602, ['20.74866', '20.76666', '20.78466', '20.80266', '20.82066'][i], 'time', last ? 'end' : 'middle');
    }

    // cylinder strokes
    const tdc = X(304.5), bdc = X(690), deg = (bdc - tdc) / 180;
    out.push(`<rect x="${tdc}" y="80" width="${bdc - tdc}" height="23" fill="#4c4800"/>`);
    out.push(`<rect x="${bdc}" y="80" width="${right - bdc}" height="23" fill="#500000"/>`);
    text((tdc + bdc) / 2, 97, 'Рабочий', 'stroke-name', 'middle');
    text(X(866), 97, 'Выпуск', 'stroke-name', 'middle');

    out.push(`<path class="trace pressure" d="${smooth(fit(pressure))}"/>`);
    out.push(`<path class="trace crank" d="M${fit(crank).join('L')}"/>`);
    pulse.forEach(p => out.push(`<path class="trace pulse" d="M${fit(p).join('L')}"/>`));

    text(LEFT + 3, 25, '1 Датчик давления в цилиндре (Bar)', 'name', 'start', 'style="fill:#18d818"');
    text(LEFT + 3, 348, '2 ДПКВ (В)', 'name', 'start', 'style="fill:#c01414"');
    text(LEFT + 3, 503, '4 Датчик синхронизации (В)', 'name', 'start', 'style="fill:#3060d8"');

    line(LEFT - 1, TOP + 0.5, right, TOP + 0.5, 'frame-line');
    line(LEFT - 0.5, TOP, LEFT - 0.5, BOTTOM, 'frame-line');
    line(LEFT - 1, BOTTOM, right, BOTTOM, 'divider');
    line(0, 331, W, 331, 'divider');
    line(0, 485.5, W, 485.5, 'frame-line');

    line(tdc, TOP, tdc, BOTTOM, 'angle-line');
    line(bdc, TOP, bdc, BOTTOM, 'angle-line');
    line(X(283), 4, X(283), BOTTOM, '', 'stroke="#70207c"');
    line(right - 1, 4, right - 1, BOTTOM, '', 'stroke="#1010d0" stroke-width="2"');
    line(right + 0.5, TOP, right + 0.5, BOTTOM, 'frame-line');
    [[X(283), '#8a1a96', '1'], [right - 1, '#1010e0', '2']].forEach(([x, fill, n]) => {
        out.push(`<path d="M${x - 5} 1h10l-5 7z" fill="${fill}"/>`);
        text(x, 6, n, 'flag', 'middle');
    });

    // crank angle ruler
    out.push(`<svg x="${tdc}" y="303" width="${right - tdc}" height="20"><rect width="100%" height="20" fill="#ccffcc"/>`);
    for (let a = 0; a <= 315; a += 9) {
        const x = a * deg, major = a % 45 === 0;
        out.push(`<path d="M${x} 0v${major ? 4 : 3}M${x} 20v-${major ? 4 : 2}" stroke="#333"/>`);
        if (major) text(a ? x + 2 : 2, 14, a + '°', 'ruler', a ? 'middle' : 'start');
    }
    out.push('</svg>');

    // marker readout
    out.push(`<g transform="translate(${tdc} 280)"><rect width="207" height="22" fill="#ccffcc"/>
        <rect x="1" width="15" height="22" fill="#e4c8ea"/><rect x="67" width="17" height="22" fill="#c0c4fa"/><rect x="135" width="16" height="22" fill="#c4c4c4"/>
        <path d="M2 4h13l-6 5v10h-1V9z" fill="#7a1a8a"/><path d="M69 4h13l-6 5v10h-1V9z" fill="#1414e8"/>
        <path d="M138.500 18.500l5-11 5 11z" fill="none" stroke="#222"/>
        <text x="17" y="16" class="measure" style="fill:#7a1a8a">-10°</text>
        <text x="85" y="16" class="measure" style="fill:#1414c8">315°</text>
        <text x="152" y="16" class="measure" style="fill:#000">325°</text></g>`);

    out.push(`<circle cx="${tdc}" cy="395" r="3.500" fill="#f02010" stroke="#ffb0a0"/>`);
    out.push('<circle cx="6" cy="539" r="3.500" fill="#2f5fe0"/>');
    const m = W - 6;
    out.push(`<path d="M${m - 3} 491l3-5 3 5zM${m - 4} 539l4-4 4 4-4 4zM${m - 3} 588l3 4 3-4z" fill="#2f5fe0"/>`);

    svg.innerHTML = out.join('');
}

draw();
window.addEventListener('resize', draw);
```
